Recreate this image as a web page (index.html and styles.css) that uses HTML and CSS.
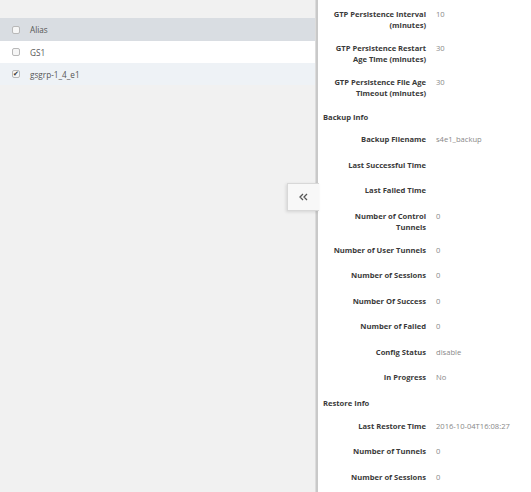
FILE: index.html
```html
<!DOCTYPE html>
<html lang="en">

<head>
  <meta charset="UTF-8">
  <title>Gateway Detail</title>
  <link rel="stylesheet" href="styles.css">
</head>

<body>
  <main class="layout">
    <section class="list">
      <div class="list-top"></div>
      <table class="grid">
        <thead>
          <tr>
            <th class="check"><span class="box"></span></th>
            <th>Alias</th>
          </tr>
        </thead>
        <tbody>
          <tr>
            <td class="check"><span class="box"></span></td>
            <td>GS1</td>
          </tr>
          <tr class="selected">
            <td class="check"><span class="box checked">&#10004;</span></td>
            <td>gsgrp-1_4_e1</td>
          </tr>
        </tbody>
      </table>
    </section>

    <button class="collapse" title="Collapse">
      <svg width="9" height="8" viewBox="0 0 9 8">
        <path d="M4 1 L1 4 L4 7 M8 1 L5 4 L8 7" fill="none" stroke="#555" stroke-width="1.3" />
      </svg>
    </button>

    <aside class="detail">
      <div class="field"><div class="label">GTP Persistence Interval (minutes)</div><div class="value">10</div></div>
      <div class="field"><div class="label">GTP Persistence Restart Age Time (minutes)</div><div class="value">30</div></div>
      <div class="field"><div class="label">GTP Persistence File Age Timeout (minutes)</div><div class="value">30</div></div>

      <h4>Backup Info</h4>
      <div class="field"><div class="label">Backup Filename</div><div class="value">s4e1_backup</div></div>
      <div class="field"><div class="label">Last Successful Time</div><div class="value"></div></div>
      <div class="field"><div class="label">Last Failed Time</div><div class="value"></div></div>
      <div class="field"><div class="label">Number of Control Tunnels</div><div class="value">0</div></div>
      <div class="field"><div class="label">Number of User Tunnels</div><div class="value">0</div></div>
      <div class="field"><div class="label">Number of Sessions</div><div class="value">0</div></div>
      <div class="field"><div class="label">Number Of Success</div><div class="value">0</div></div>
      <div class="field"><div class="label">Number of Failed</div><div class="value">0</div></div>
      <div class="field"><div class="label">Config Status</div><div class="value">disable</div></div>
      <div class="field"><div class="label">In Progress</div><div class="value">No</div></div>

      <h4>Restore Info</h4>
      <div class="field"><div class="label">Last Restore Time</div><div class="value">2016-10-04T16:08:27</div></div>
      <div class="field"><div class="label">Number of Tunnels</div><div class="value">0</div></div>
      <div class="field"><div class="label">Number of Sessions</div><div class="value">0</div></div>
    </aside>
  </main>
</body>

</html>
```

FILE: styles.css
```css
/* Base */
* {
  box-sizing: border-box;
  margin: 0;
  padding: 0;
}

html,
body {
  height: 100%;
  overflow: hidden;
  font-family: 'Open Sans', 'Noto Sans', sans-serif;
  font-size: 8px;
  background: #f1f1f1;
  color: #333;
}

.layout {
  display: flex;
  height: 100%;
  position: relative;
}

/* Left list */
.list {
  width: 316px;
  flex: none;
  border-right: 1px solid #dcdcdc;
}

.list-top {
  height: 18px;
}

.grid {
  width: 100%;
  border-collapse: collapse;
  color: #555;
  font-size: 8.2px;
}

.grid th,
.grid td {
  height: 22px;
  text-align: left;
  font-weight: normal;
  padding: 0;
}

.grid thead tr {
  background: #d9dde2;
}

.grid thead th {
  height: 23px;
}

.grid tbody tr {
  background: #fff;
}

.grid tbody tr.selected {
  background: #eef2f6;
}

.grid .check {
  width: 30px;
  padding-left: 12px;
}

.box {
  display: block;
  width: 8px;
  height: 8px;
  border: 1px solid #b8b8b8;
  border-radius: 2px;
  background: #f6f6f6;
  font-size: 7px;
  line-height: 6px;
  color: #333;
  text-align: center;
}

/* Collapse toggle */
.collapse {
  position: absolute;
  left: 287px;
  top: 183px;
  width: 32px;
  height: 28px;
  background: #f8f8f8;
  border: 1px solid #d8d8d8;
  border-right: none;
  box-shadow: -1px 1px 3px rgba(0, 0, 0, 0.12);
  display: flex;
  align-items: center;
  justify-content: center;
  cursor: pointer;
  z-index: 2;
}

/* Right detail panel */
.detail {
  flex: 1;
  background: #fff;
  border-left: 2px solid #c9c9c9;
  padding-top: 3px;
  padding-left: 8px;
  font-size: 7.6px;
}

.field {
  display: flex;
  align-items: flex-start;
  min-height: 25.5px;
  padding: 6px 0;
  line-height: 11px;
}

.label {
  width: 100px;
  flex: none;
  text-align: right;
  font-weight: bold;
  color: #3a3a3a;
}

.value {
  padding-left: 10px;
  color: #888;
}

.detail h4 {
  font-size: 7.6px;
  font-weight: bold;
  color: #3a3a3a;
  line-height: 11px;
  padding: 6.5px 0 5.5px;
  margin-left: -3px;
}
```
